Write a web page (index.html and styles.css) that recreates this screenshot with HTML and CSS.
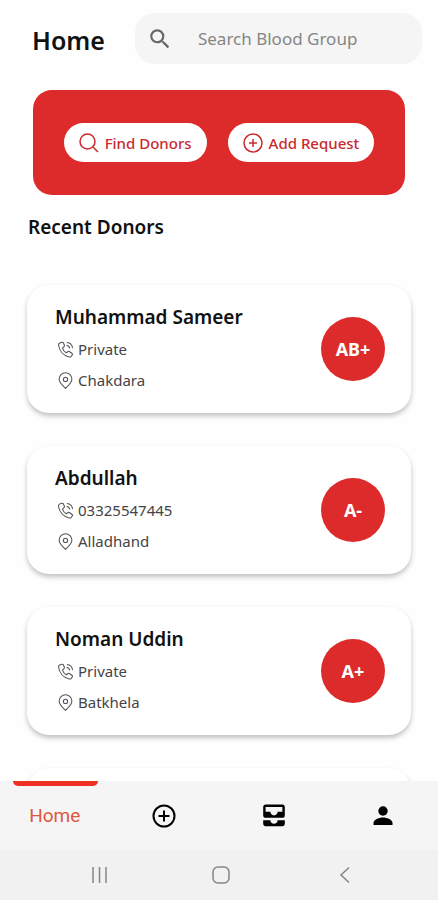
FILE: index.html
```html
<!DOCTYPE html>
<html lang="en">
<head>
<meta charset="utf-8">
<meta name="viewport" content="width=device-width, initial-scale=1">
<title>Home</title>
<link rel="stylesheet" href="styles.css">
</head>
<body>
<svg class="sprite" aria-hidden="true">
  <symbol id="phone" viewBox="0 0 24 24">
    <path d="M4.500 2.500 7 1.800c1-.3 1.700.1 2.100 1l1.300 3.200c.3.800.1 1.500-.5 2L7.700 10c.9 2.800 2.600 5 5.300 6.600l2.600-1.800c.6-.4 1.300-.4 1.900 0l3.800 2.800c.7.600.8 1.300.3 2l-1.400 2c-.7.900-1.600 1.200-2.700 1C9.500 20.700 3.200 14.300 2.200 5.700c-.2-1.600.8-2.700 2.300-3.200z"/>
    <path d="M14 2c4.500.5 7.500 3.500 8 8M13.500 6c2.500.4 4.100 2 4.500 4.500"/>
  </symbol>
  <symbol id="pin" viewBox="0 0 24 24">
    <path d="M12 23c-2-2.200-9-7-9-13a9 9 0 0 1 18 0c0 6-7 10.800-9 13z"/>
    <circle cx="12" cy="10.500" r="3"/>
  </symbol>
</svg>
<div class="app">
  <header class="top">
    <h1 class="title">Home</h1>
    <label class="search">
      <svg class="search-icon" viewBox="0 0 24 24" aria-hidden="true"><path d="M15.500 14h-.79l-.28-.27A6.471 6.471 0 0 0 16 9.500 6.500 6.500 0 1 0 9.500 16c1.610 0 3.090-.59 4.230-1.570l.27.28v.79l5 4.990L20.490 19l-4.990-5zm-6 0C7.010 14 5 11.990 5 9.500S7.010 5 9.500 5 14 7.010 14 9.500 11.990 14 9.500 14z"/></svg>
      <input class="search-input" type="text" placeholder="Search Blood Group" aria-label="Search Blood Group">
    </label>
  </header>
  <main class="content">
    <section class="actions">
      <button class="pill" type="button">
        <svg class="pill-icon" viewBox="0 0 20 20" aria-hidden="true"><circle cx="8.500" cy="8.500" r="7.500"/><path d="m14 14 5 5"/></svg>
        Find Donors
      </button>
      <button class="pill" type="button">
        <svg class="pill-icon" viewBox="0 0 20 20" aria-hidden="true"><circle cx="10" cy="10" r="9"/><path d="M10 6v8M6 10h8"/></svg>
        Add Request
      </button>
    </section>
    <h2 class="section-title">Recent Donors</h2>
    <section class="donors">
      <article class="card">
        <div class="info">
          <h3 class="name">Muhammad Sameer</h3>
          <p class="line"><svg class="line-icon" aria-hidden="true"><use href="#phone"/></svg>Private</p>
          <p class="line"><svg class="line-icon" aria-hidden="true"><use href="#pin"/></svg>Chakdara</p>
        </div>
        <span class="group">AB+</span>
      </article>
      <article class="card">
        <div class="info">
          <h3 class="name">Abdullah</h3>
          <p class="line"><svg class="line-icon" aria-hidden="true"><use href="#phone"/></svg>03325547445</p>
          <p class="line"><svg class="line-icon" aria-hidden="true"><use href="#pin"/></svg>Alladhand</p>
        </div>
        <span class="group">A-</span>
      </article>
      <article class="card">
        <div class="info">
          <h3 class="name">Noman Uddin</h3>
          <p class="line"><svg class="line-icon" aria-hidden="true"><use href="#phone"/></svg>Private</p>
          <p class="line"><svg class="line-icon" aria-hidden="true"><use href="#pin"/></svg>Batkhela</p>
        </div>
        <span class="group">A+</span>
      </article>
      <article class="card"></article>
    </section>
  </main>
  <nav class="tabs">
    <a class="tab active" href="#home">Home</a>
    <a class="tab" href="#add" aria-label="Add">
      <svg class="tab-icon" viewBox="0 0 24 24" aria-hidden="true"><circle class="ring" cx="12" cy="12" r="10.500"/><path class="ring" d="M12 6.500v11M6.500 12h11"/></svg>
    </a>
    <a class="tab" href="#inbox" aria-label="Requests">
      <svg class="tab-icon" viewBox="2 2.500 20 20" aria-hidden="true"><path d="M19 3H5c-1.100 0-2 .9-2 2v7c0 1.100.9 2 2 2h14c1.100 0 2-.9 2-2V5c0-1.100-.9-2-2-2zm0 6h-4c0 1.620-1.380 3-3 3s-3-1.380-3-3H5V5h14v4zm-4 7h6v3c0 1.100-.9 2-2 2H5c-1.100 0-2-.9-2-2v-3h6c0 1.660 1.340 3 3 3s3-1.340 3-3z"/></svg>
    </a>
    <a class="tab" href="#profile" aria-label="Profile">
      <svg class="tab-icon" viewBox="0 0 24 24" aria-hidden="true"><circle cx="12" cy="7" r="4.700"/><path d="M2.500 21v-2c0-3.300 5.500-5.500 9.500-5.500s9.500 2.200 9.500 5.500v2z"/></svg>
    </a>
  </nav>
  <footer class="system">
    <button class="key" type="button" aria-label="Recent apps"><svg class="key-icon" viewBox="0 0 20 20" aria-hidden="true"><path d="M4 2v16M10.500 2v16M17 2v16"/></svg></button>
    <button class="key" type="button" aria-label="Home screen"><svg class="key-icon" viewBox="0 0 20 20" aria-hidden="true"><rect x="2" y="2" width="16" height="16" rx="5"/></svg></button>
    <button class="key" type="button" aria-label="Back"><svg class="key-icon" viewBox="0 0 20 20" aria-hidden="true"><path d="M15 2.500 7 10l8 7.500"/></svg></button>
  </footer>
</div>
</body>
</html>
```
FILE: styles.css
```css
* {
  box-sizing: border-box;
}

body {
  margin: 0;
  background: #fefefe;
  color: #111;
  font-family: "Noto Sans", "Open Sans", sans-serif;
}

h1, h2, h3, p {
  margin: 0;
}

.sprite {
  display: none;
}

.app {
  display: flex;
  flex-direction: column;
  height: 100vh;
}

.top {
  display: flex;
  align-items: center;
  gap: 30px;
  padding: 13px 16px 0 32px;
}

.title {
  font-size: 25px;
  line-height: 32px;
  font-weight: 600;
  padding-top: 2px;
}

.search {
  flex: 1;
  display: flex;
  align-items: center;
  gap: 25px;
  min-width: 0;
  height: 51px;
  padding: 0 12px;
  border-radius: 20px;
  background: #f5f5f5;
}

.search-icon {
  flex: none;
  width: 26px;
  height: 26px;
  fill: #666;
}

.search-input {
  flex: 1;
  min-width: 0;
  padding: 0;
  border: 0;
  outline: 0;
  background: none;
  font: inherit;
  font-size: 17px;
  line-height: 24px;
  color: #111;
}

.search-input::placeholder {
  color: #858585;
  opacity: 1;
}

.content {
  flex: 1;
  min-height: 0;
  overflow: hidden;
  padding: 26px 27px 0;
}

.actions {
  display: flex;
  justify-content: center;
  align-items: center;
  gap: 21px;
  height: 105px;
  margin: 0 6px;
  border-radius: 19px;
  background: #dd2b2b;
}

.pill {
  display: flex;
  align-items: center;
  gap: 6px;
  height: 39px;
  padding: 0 15px;
  border: 0;
  border-radius: 20px;
  background: #fff;
  color: #c92a2e;
  font: inherit;
  font-size: 15px;
  font-weight: 500;
  white-space: nowrap;
}

.pill-icon {
  width: 20px;
  height: 20px;
  fill: none;
  stroke: #c92a2e;
  stroke-width: 1.5;
}

.section-title {
  margin-top: 18px;
  padding-left: 1px;
  font-size: 19px;
  line-height: 28px;
  font-weight: 600;
}

.donors {
  display: flex;
  flex-direction: column;
  gap: 33px;
  padding-top: 44px;
}

.card {
  display: flex;
  align-items: center;
  justify-content: space-between;
  min-height: 128px;
  padding: 0 26px 0 28px;
  border-radius: 22px;
  background: #fff;
  box-shadow: 0 3px 5px rgba(0, 0, 0, 0.24);
}

.name {
  margin-bottom: 3px;
  font-size: 19px;
  line-height: 28px;
  font-weight: 600;
}

.line {
  display: flex;
  align-items: center;
  gap: 4px;
  padding-left: 2px;
  font-size: 15px;
  line-height: 31px;
  color: #444;
}

.line-icon {
  width: 17px;
  height: 17px;
  fill: none;
  stroke: #555;
  stroke-width: 1.5;
}

.group {
  display: grid;
  place-items: center;
  width: 64px;
  height: 64px;
  border-radius: 50%;
  background: #dd2b2b;
  color: #fff;
  font-size: 18px;
  font-weight: 700;
}

.tabs {
  display: grid;
  grid-template-columns: repeat(4, 1fr);
  height: 69px;
  background: #f5f5f5;
}

.tab {
  position: relative;
  display: grid;
  place-items: center;
  color: #e0573f;
  font-family: Roboto, sans-serif;
  font-size: 19px;
  text-decoration: none;
}

.active::before {
  content: "";
  position: absolute;
  top: 0;
  left: 13px;
  right: 12px;
  height: 5px;
  border-radius: 0 0 5px 5px;
  background: #ee3124;
}

.tab-icon {
  width: 24px;
  height: 24px;
  fill: #000;
}

.ring {
  fill: none;
  stroke: #000;
  stroke-width: 2;
}

.system {
  display: grid;
  grid-template-columns: repeat(3, 1fr);
  height: 50px;
  padding: 0 33px 0 38px;
  background: #f1f1f1;
}

.key {
  display: grid;
  place-items: center;
  padding: 0;
  border: 0;
  background: none;
}

.key-icon {
  width: 20px;
  height: 20px;
  fill: none;
  stroke: #858585;
  stroke-width: 1.5;
}
```
